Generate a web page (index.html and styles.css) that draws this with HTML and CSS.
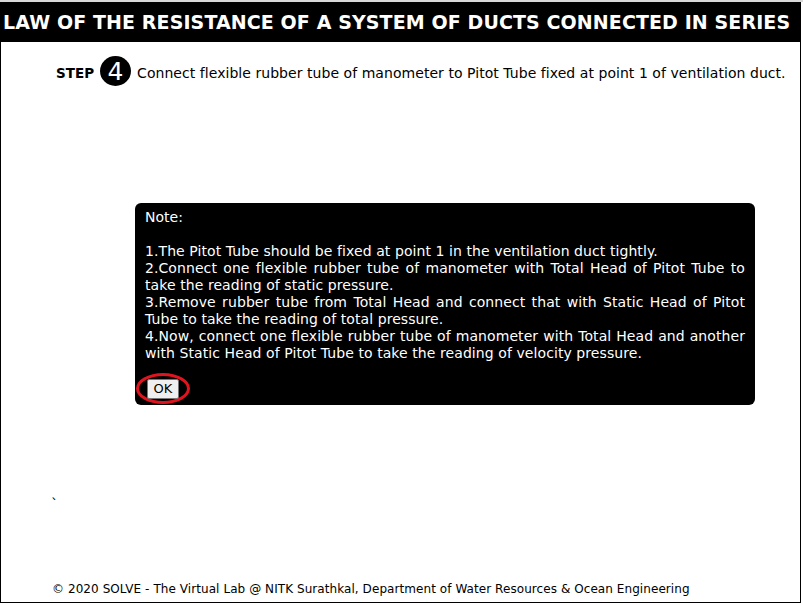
FILE: index.html
```html
<!DOCTYPE html>
<html>
<head>
<meta charset="utf-8">
<link rel="stylesheet" href="styles.css">
</head>
<body>
<div class="page">
  <div class="header">LAW OF THE RESISTANCE OF A SYSTEM OF DUCTS CONNECTED IN SERIES</div>
  <div class="step">
    <span class="step-label">STEP</span>
    <span class="step-num">4</span>
    <span class="step-text">Connect flexible rubber tube of manometer to Pitot Tube fixed at point 1 of ventilation duct.</span>
  </div>
  <div class="stage">
    <div class="note">
      <p class="note-title">Note:</p>
      <p class="note-body">1.The Pitot Tube should be fixed at point 1 in the ventilation duct tightly.<br>2.Connect one flexible rubber tube of manometer with Total Head of Pitot Tube to take the reading of static pressure.<br>3.Remove rubber tube from Total Head and connect that with Static Head of Pitot Tube to take the reading of total pressure.<br>4.Now, connect one flexible rubber tube of manometer with Total Head and another with Static Head of Pitot Tube to take the reading of velocity pressure.</p>
      <div class="ok-wrap"><button class="ok">OK</button></div>
    </div>
    <div class="tick">`</div>
  </div>
  <div class="footer">© 2020 SOLVE - The Virtual Lab @ NITK Surathkal, Department of Water Resources &amp; Ocean Engineering</div>
</div>
</body>
</html>
```
FILE: styles.css
```css
html, body {
  margin: 0;
  padding: 0;
  background: #fff;
}
body {
  font-family: "DejaVu Sans", Verdana, sans-serif;
  font-size: 14px;
  color: #000;
  border-top: 2px solid #d8d8d8;
}
.page {
  width: 799px;
  height: 600px;
  border: 1px solid #000;
  border-top: none;
  display: flex;
  flex-direction: column;
}
.header {
  background: #000;
  color: #fff;
  font-weight: bold;
  font-size: 19px;
  letter-spacing: 0.1px;
  height: 40px;
  line-height: 40px;
  padding-left: 2px;
  white-space: nowrap;
  margin-right: -1px;
}
.step {
  display: flex;
  align-items: center;
  padding: 14px 0 0 55px;
  height: 30px;
}
.step-label {
  font-weight: bold;
  font-size: 13.5px;
  margin-right: 6px;
  padding-top: 3px;
}
.step-num {
  width: 31px;
  height: 30px;
  border-radius: 50%;
  background: #000;
  color: #fff;
  font-size: 25px;
  display: flex;
  align-items: center;
  justify-content: center;
  margin-right: 6px;
}
.step-text {
  padding-top: 4px;
  letter-spacing: 0.05px;
}
.stage {
  flex: 1;
  padding: 117px 0 0 134px;
}
.note {
  width: 600px;
  background: #000;
  color: #fff;
  border-radius: 6px;
  padding: 6px 10px 1px 10px;
  line-height: 17px;
}
.note p {
  margin: 0;
}
.note-title {
  margin-bottom: 17px !important;
}
.note-body {
  text-align: justify;
  letter-spacing: 0.08px;
}
.ok-wrap {
  margin-top: 11px;
  margin-left: -9px;
  width: 54px;
  height: 31px;
  border: 3px solid #e0141e;
  border-radius: 50%;
  box-sizing: border-box;
  display: flex;
  align-items: center;
  justify-content: center;
}
.ok {
  font-family: "DejaVu Sans", Verdana, sans-serif;
  font-size: 13px;
  background: #efefef;
  border: 1px solid #767676;
  border-radius: 2px;
  padding: 1px 6px;
  color: #000;
  height: 20px;
  line-height: 16px;
}
.tick {
  margin: 91px 0 0 -84px;
  line-height: 17px;
}
.footer {
  font-size: 12px;
  letter-spacing: 0.07px;
  padding: 0 0 6px 51px;
}
```
